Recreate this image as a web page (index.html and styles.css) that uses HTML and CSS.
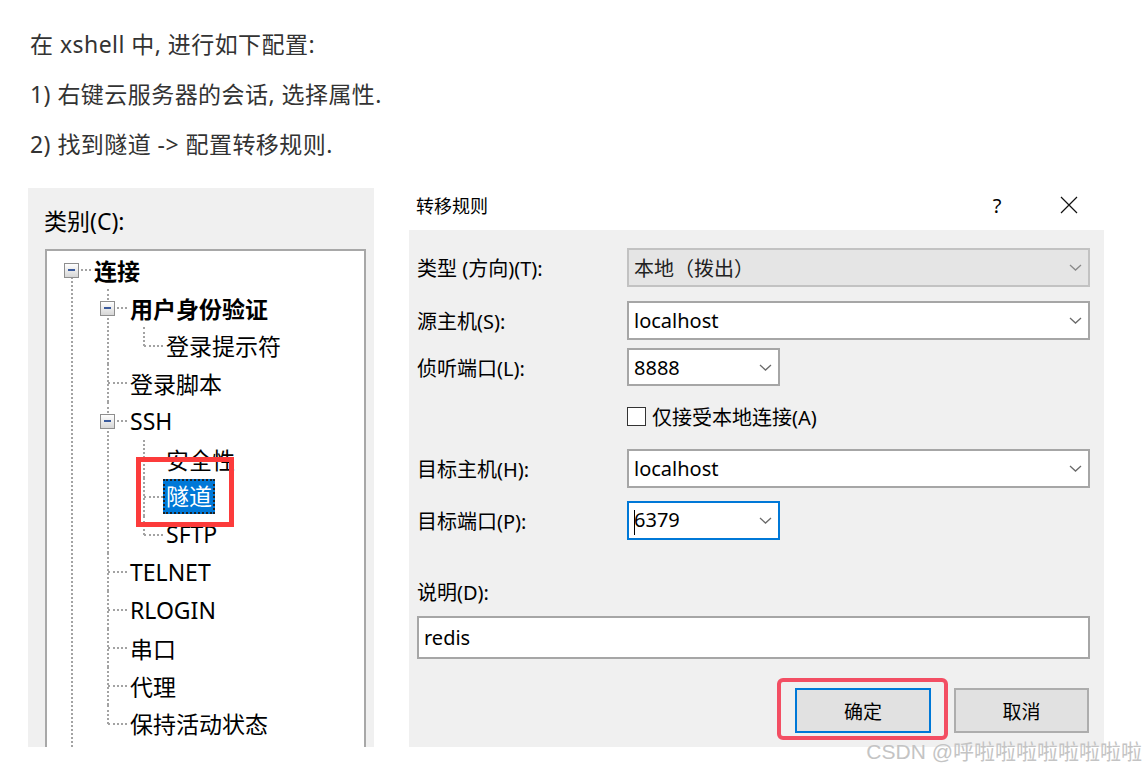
FILE: index.html
```html
<!DOCTYPE html>
<html lang="zh-CN">
<head>
  <meta charset="UTF-8" />
  <meta name="viewport" content="width=device-width, initial-scale=1.0"/>
  <title>xshell 隧道配置</title>
  <link rel="stylesheet" href="styles.css">
</head>
<body>

<div class="intro">
  <p>在 xshell 中, 进行如下配置:</p>
  <p>1) 右键云服务器的会话, 选择属性.</p>
  <p>2) 找到隧道 -&gt; 配置转移规则.</p>
</div>

<div class="figure">

  <!-- session properties: category tree -->
  <div class="category">
    <div class="cat-label">类别(C):</div>
    <div class="tree-box">
      <ul class="tree">
        <li class="root">
          <div class="row"><i class="exp"></i><b>连接</b></div>
          <ul>
            <li>
              <div class="row"><i class="exp"></i><b>用户身份验证</b></div>
              <ul>
                <li><div class="row">登录提示符</div></li>
              </ul>
            </li>
            <li><div class="row">登录脚本</div></li>
            <li>
              <div class="row"><i class="exp"></i>SSH</div>
              <ul>
                <li><div class="row">安全性</div></li>
                <li><div class="row"><span class="sel">隧道</span></div></li>
                <li><div class="row">SFTP</div></li>
              </ul>
            </li>
            <li><div class="row">TELNET</div></li>
            <li><div class="row">RLOGIN</div></li>
            <li><div class="row">串口</div></li>
            <li><div class="row">代理</div></li>
            <li><div class="row">保持活动状态</div></li>
          </ul>
        </li>
      </ul>
    </div>
    <div class="mark"></div>
  </div>

  <!-- forwarding rule dialog -->
  <div class="dialog">
    <div class="title-bar">
      <span class="title">转移规则</span>
      <span class="help">?</span>
      <svg class="close" width="18" height="18" viewBox="0 0 18 18">
        <path d="M1 1 L17 17 M17 1 L1 17" stroke="#111" stroke-width="1.2" fill="none"/>
      </svg>
    </div>

    <div class="dlg-body">
      <div class="field">
        <label>类型 (方向)(T):</label>
        <div class="combo disabled"><span>本地（拨出）</span><svg class="chev" width="13" height="7" viewBox="0 0 13 7"><path d="M1 1 L6.5 6 L12 1" stroke="#8a8a8a" stroke-width="1.3" fill="none"/></svg></div>
      </div>
      <div class="field f-src">
        <label>源主机(S):</label>
        <div class="combo"><span>localhost</span><svg class="chev" width="13" height="7" viewBox="0 0 13 7"><path d="M1 1 L6.5 6 L12 1" stroke="#6a6a6a" stroke-width="1.3" fill="none"/></svg></div>
      </div>
      <div class="field f-listen">
        <label>侦听端口(L):</label>
        <div class="combo short"><span>8888</span><svg class="chev" width="13" height="7" viewBox="0 0 13 7"><path d="M1 1 L6.5 6 L12 1" stroke="#6a6a6a" stroke-width="1.3" fill="none"/></svg></div>
      </div>
      <div class="check-row">
        <span class="checkbox"></span>
        <span>仅接受本地连接(A)</span>
      </div>
      <div class="field f-dhost">
        <label>目标主机(H):</label>
        <div class="combo"><span>localhost</span><svg class="chev" width="13" height="7" viewBox="0 0 13 7"><path d="M1 1 L6.5 6 L12 1" stroke="#6a6a6a" stroke-width="1.3" fill="none"/></svg></div>
      </div>
      <div class="field f-dport">
        <label>目标端口(P):</label>
        <div class="combo short focus"><span><i class="caret"></i>6379</span><svg class="chev" width="13" height="7" viewBox="0 0 13 7"><path d="M1 1 L6.5 6 L12 1" stroke="#6a6a6a" stroke-width="1.3" fill="none"/></svg></div>
      </div>

      <div class="desc-label">说明(D):</div>
      <div class="text-input">redis</div>

      <div class="actions">
        <div class="btn ok">确定</div>
        <div class="btn">取消</div>
      </div>
    </div>
  </div>
</div>

<div class="watermark">CSDN @呼啦啦啦啦啦啦啦啦</div>

</body>
</html>
```

FILE: styles.css
```css
* {
  box-sizing: border-box;
}

body {
  margin: 0;
  height: 772px;
  overflow: hidden;
  position: relative;
  background: #fff;
  font-family: "Noto Sans", "Noto Sans CJK SC", sans-serif;
  color: #000;
}

/* intro text */
.intro {
  padding: 19px 0 0 30px;
}

.intro p {
  margin: 0;
  font-size: 23px;
  line-height: 50px;
  letter-spacing: 0.45px;
  color: #333;
}

.figure {
  display: flex;
  align-items: flex-start;
  margin: 19px 0 0 28px;
  height: 559px;
}

/* left panel */
.category {
  position: relative;
  width: 346px;
  height: 559px;
  background: #f0f0f0;
  overflow: hidden;
}

.cat-label {
  padding: 18px 0 0 16px;
  font-size: 23px;
  line-height: 30px;
}

.tree-box {
  margin: 13px 0 0 17px;
  width: 321px;
  height: 498px;
  background: #fff;
  border: 2px solid #a8a8a8;
  border-bottom: none;
  overflow: hidden;
  font-size: 23px;
}

.tree, .tree ul {
  list-style: none;
  margin: 0;
  padding: 0;
}

.tree { padding-left: 7px; }
.tree ul { padding-left: 36px; }

.tree li {
  position: relative;
}

/* sibling line */
.tree li::before {
  content: '';
  position: absolute;
  left: 17px;
  top: 0;
  bottom: 0;
  border-left: 2px dotted #a3a3a3;
}

.tree li:last-child::before {
  bottom: auto;
  height: 19px;
}

.tree li.root::before {
  top: 19px;
  bottom: -20px;
  height: auto;
}

.row {
  position: relative;
  height: 37.8px;
  display: flex;
  align-items: center;
  padding-left: 40px;
  white-space: nowrap;
}

/* branch line */
.row::before {
  content: '';
  position: absolute;
  left: 18px;
  top: 18px;
  width: 19px;
  border-top: 2px dotted #a3a3a3;
}

.exp {
  position: absolute;
  left: 10px;
  top: 12px;
  width: 15px;
  height: 15px;
  border: 1px solid #8e8e8e;
  background: linear-gradient(#fff, #d6d6d6);
  z-index: 1;
}

.exp::after {
  content: '';
  position: absolute;
  left: 3px;
  top: 5px;
  width: 7px;
  height: 2px;
  background: #3a5a9c;
}

.sel {
  margin-left: -3px;
  padding: 0 3px;
  height: 35px;
  line-height: 35px;
  background: #0078d7;
  color: #fff;
  outline: 2px dotted #222;
  outline-offset: -2px;
}

.mark {
  position: absolute;
  left: 108px;
  top: 269px;
  width: 98px;
  height: 70px;
  border: 5px solid #fc3b3b;
  z-index: 2;
}

/* dialog */
.dialog {
  margin-left: 35px;
  width: 695px;
  height: 559px;
  display: flex;
  flex-direction: column;
  font-size: 20px;
}

.title-bar {
  height: 42px;
  display: flex;
  align-items: flex-start;
  padding: 5px 26px 0 7px;
}

.title {
  flex: 1;
  font-size: 18px;
  line-height: 26px;
}

.help {
  width: 20px;
  margin-right: 53px;
  text-align: center;
  font-size: 20px;
  line-height: 26px;
}

.close {
  margin-top: 3px;
}

.dlg-body {
  flex: 1;
  background: #f0f0f0;
  padding: 18px 14px 0 8px;
}

.field {
  display: flex;
  align-items: center;
}

.field label {
  width: 210px;
}

.combo {
  flex: 1;
  height: 39px;
  display: flex;
  align-items: center;
  justify-content: space-between;
  padding: 0 6px 0 5px;
  border: 2px solid #a6a6a6;
  background: #fff;
}

.combo.short {
  flex: none;
  width: 153px;
}

.combo.disabled {
  background: #e5e5e5;
  border-color: #c2c2c2;
  color: #222;
}

.combo.focus {
  border-color: #0078d7;
}

.caret {
  display: inline-block;
  width: 0;
  height: 25px;
  margin-right: -1px;
  border-left: 1.5px solid #000;
  vertical-align: middle;
}

.f-src    { margin-top: 14px; }
.f-listen { margin-top: 8px; }
.f-listen .combo { height: 38px; }
.f-dhost  { margin-top: 23px; }
.f-dport  { margin-top: 13px; }

.check-row {
  display: flex;
  align-items: center;
  margin-top: 21px;
  padding-left: 210px;
  height: 19px;
}

.checkbox {
  width: 19px;
  height: 19px;
  margin-right: 6px;
  border: 1.5px solid #333;
  background: #fff;
}

.desc-label {
  margin-top: 40px;
  line-height: 26px;
}

.text-input {
  margin-top: 10px;
  height: 43px;
  padding-left: 5px;
  line-height: 39px;
  border: 2px solid #a6a6a6;
  background: #fff;
}

.actions {
  display: flex;
  justify-content: flex-end;
  gap: 23px;
  margin-top: 29px;
  padding-right: 1px;
}

.btn {
  width: 135px;
  height: 45px;
  display: flex;
  align-items: center;
  justify-content: center;
  font-size: 19px;
  background: #e1e1e1;
  border: 2px solid #adadad;
}

.btn.ok {
  position: relative;
  width: 136px;
  border-color: #0078d7;
}

.btn.ok::before {
  content: '';
  position: absolute;
  left: -20px;
  top: -12px;
  right: -19px;
  bottom: -9px;
  border: 4px solid #f34e63;
  border-radius: 6px;
}

.watermark {
  position: absolute;
  right: 4px;
  bottom: 8px;
  font-family: "Liberation Sans", "Noto Sans CJK SC", sans-serif;
  font-size: 21px;
  line-height: 24px;
  color: #c4c4c4;
}
```
